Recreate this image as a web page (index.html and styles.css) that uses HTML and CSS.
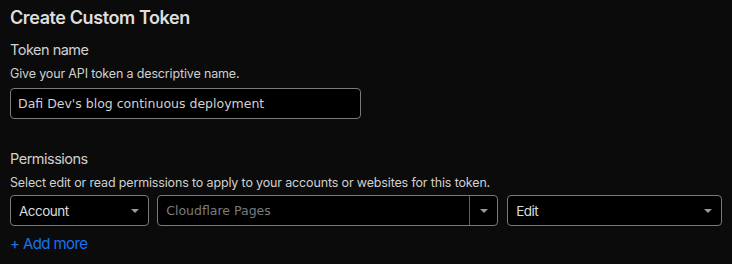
FILE: index.html
```html
<html>
<head>
    <title>Create Custom Token</title>
    <link rel="stylesheet" href="styles.css">
</head>
<body>
<div class="page">
    <h1 class="title">Create Custom Token</h1>

    <div class="section">
        <div class="label">Token name</div>
        <div class="hint">Give your API token a descriptive name.</div>
        <div class="text-input">Dafi Dev's blog continuous deployment</div>
    </div>

    <div class="section permissions">
        <div class="label">Permissions</div>
        <div class="hint">Select edit or read permissions to apply to your accounts or websites for this token.</div>
        <div class="perm-row">
            <div class="select select-account">
                <span class="value">Account</span>
                <span class="caret"></span>
            </div>
            <div class="select select-combo">
                <span class="value placeholder">Cloudflare Pages</span>
                <span class="combo-btn"><span class="caret"></span></span>
            </div>
            <div class="select select-level">
                <span class="value">Edit</span>
                <span class="caret"></span>
            </div>
        </div>
        <a class="add-more" href="#">+ Add more</a>
    </div>
</div>
</body>
</html>
```

FILE: styles.css
```css
html, body{
    margin: 0;
    background-color: #0b0b0b;
}
.page{
    padding: 6px 10px 0 10px;
    font-family: Inter, "Noto Sans", sans-serif;
    color: #d4d4d4;
}
.title{
    margin: 0;
    font-size: 18px;
    line-height: 24px;
    font-weight: 600;
    letter-spacing: -0.4px;
    color: #dedede;
}
.section{
    margin-top: 10px;
}
.permissions{
    margin-top: 30px;
}
.label{
    font-size: 14.5px;
    line-height: 20px;
    letter-spacing: -0.5px;
    color: #d0d0d0;
}
.hint{
    margin-top: 6px;
    font-size: 12.5px;
    line-height: 16px;
    letter-spacing: -0.15px;
    color: #d0d0d0;
}
.text-input{
    box-sizing: border-box;
    margin-top: 6px;
    width: 351px;
    height: 31px;
    padding: 0 7px;
    display: flex;
    align-items: center;
    background-color: #000;
    border: 1px solid #7a7a7a;
    border-radius: 4px;
    font-family: "DejaVu Sans", sans-serif;
    font-size: 12.5px;
    color: #d2d2d2;
}
.perm-row{
    margin-top: 4px;
    display: flex;
    gap: 8px;
}
.select{
    box-sizing: border-box;
    height: 31px;
    display: flex;
    align-items: center;
    background-color: #000;
    border: 1px solid #7a7a7a;
    border-radius: 4px;
    font-size: 13.5px;
    letter-spacing: -0.5px;
    color: #dcdcdc;
}
.select .value{
    flex: 1;
    padding-left: 8px;
}
.select-account{
    width: 140px;
    padding-right: 9px;
}
.select-combo{
    width: 343px;
}
.select-level{
    width: 216px;
    margin-left: 1px;
    padding-right: 9px;
}
.placeholder{
    font-family: "DejaVu Sans", sans-serif;
    font-size: 12.5px;
    letter-spacing: 0;
    color: #7c7c7c;
}
.combo-btn{
    width: 27px;
    height: 100%;
    border-left: 1px solid #5e5e5e;
    display: flex;
    align-items: center;
    justify-content: center;
}
.caret{
    width: 0;
    height: 0;
    border-left: 4px solid transparent;
    border-right: 4px solid transparent;
    border-top: 4px solid #9a9a9a;
}
.add-more{
    display: inline-block;
    margin-top: 8px;
    font-size: 15px;
    line-height: 20px;
    letter-spacing: -0.6px;
    color: #1a72f0;
    text-decoration: none;
}
```
